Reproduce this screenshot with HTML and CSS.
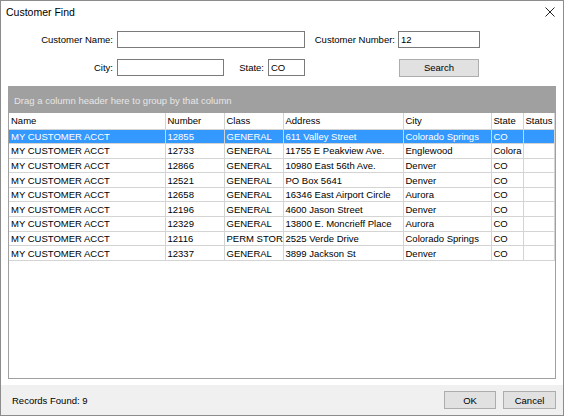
FILE: index.html
```html
<!DOCTYPE html>
<html lang="en">
<head>
    <meta charset="UTF-8">
    <title>Customer Find</title>
    <link rel="stylesheet" href="styles.css">
</head>
<body>
<div class="window">
    <div class="titlebar">
        <span class="title">Customer Find</span>
        <svg class="close" width="10" height="10" viewBox="0 0 10 10">
            <path d="M0.5 0.5 L9.5 9.5 M9.5 0.5 L0.5 9.5" stroke="#222" stroke-width="1" fill="none"/>
        </svg>
    </div>

    <div class="search-form">
        <div class="form-row">
            <label class="lbl lbl-main">Customer Name:</label>
            <input class="txt txt-name" type="text" value="">
            <label class="lbl lbl-number">Customer Number:</label>
            <input class="txt txt-number" type="text" value="12">
        </div>
        <div class="form-row">
            <label class="lbl lbl-main">City:</label>
            <input class="txt txt-city" type="text" value="">
            <label class="lbl lbl-state">State:</label>
            <input class="txt txt-state" type="text" value="CO">
            <button class="btn btn-search">Search</button>
        </div>
    </div>

    <div class="grid">
        <div class="group-panel">Drag a column header here to group by that column</div>
        <table class="results">
            <colgroup>
                <col style="width:156px"><col style="width:59px"><col style="width:59px"><col style="width:120px">
                <col style="width:88px"><col style="width:32px"><col style="width:31px">
            </colgroup>
            <thead>
                <tr><th>Name</th><th>Number</th><th>Class</th><th>Address</th><th>City</th><th>State</th><th>Status</th></tr>
            </thead>
            <tbody>
                <tr class="selected"><td>MY CUSTOMER ACCT</td><td>12855</td><td>GENERAL</td><td>611 Valley Street</td><td>Colorado Springs</td><td>CO</td><td></td></tr>
                <tr><td>MY CUSTOMER ACCT</td><td>12733</td><td>GENERAL</td><td>11755 E Peakview Ave.</td><td>Englewood</td><td>Colora</td><td></td></tr>
                <tr><td>MY CUSTOMER ACCT</td><td>12866</td><td>GENERAL</td><td>10980 East 56th Ave.</td><td>Denver</td><td>CO</td><td></td></tr>
                <tr><td>MY CUSTOMER ACCT</td><td>12521</td><td>GENERAL</td><td>PO Box 5641</td><td>Denver</td><td>CO</td><td></td></tr>
                <tr><td>MY CUSTOMER ACCT</td><td>12658</td><td>GENERAL</td><td>16346 East Airport Circle</td><td>Aurora</td><td>CO</td><td></td></tr>
                <tr><td>MY CUSTOMER ACCT</td><td>12196</td><td>GENERAL</td><td>4600 Jason Street</td><td>Denver</td><td>CO</td><td></td></tr>
                <tr><td>MY CUSTOMER ACCT</td><td>12329</td><td>GENERAL</td><td>13800 E. Moncrieff Place</td><td>Aurora</td><td>CO</td><td></td></tr>
                <tr><td>MY CUSTOMER ACCT</td><td>12116</td><td><span class="clip">PERM STORA</span></td><td>2525 Verde Drive</td><td>Colorado Springs</td><td>CO</td><td></td></tr>
                <tr><td>MY CUSTOMER ACCT</td><td>12337</td><td>GENERAL</td><td>3899 Jackson St</td><td>Denver</td><td>CO</td><td></td></tr>
            </tbody>
        </table>
    </div>

    <div class="statusbar">
        <span class="records">Records Found: 9</span>
        <div class="actions">
            <button class="btn btn-ok">OK</button>
            <button class="btn btn-cancel">Cancel</button>
        </div>
    </div>
</div>
</body>
</html>
```

FILE: styles.css
```css
* {
    box-sizing: border-box;
}
body {
    margin: 0;
    font-family: "Liberation Sans", Arial, sans-serif;
    font-size: 9.5px;
    color: #000;
    background: #fff;
}
.window {
    width: 564px;
    height: 416px;
    border: 1px solid #8c8c8c;
    display: flex;
    flex-direction: column;
    background: #fff;
}
.titlebar {
    height: 21px;
    display: flex;
    align-items: center;
    justify-content: space-between;
    padding: 0 8px 0 5px;
}
.title {
    font-size: 10.5px;
}

/* search form */
.search-form {
    padding: 9px 0 0 7px;
    display: flex;
    flex-direction: column;
    gap: 11px;
}
.form-row {
    display: flex;
    align-items: center;
    height: 17px;
}
.lbl {
    text-align: right;
    white-space: nowrap;
}
.lbl-main {
    width: 105px;
    margin-right: 4px;
}
.lbl-number {
    width: 90px;
    margin-right: 3px;
}
.lbl-state {
    width: 40px;
    margin-right: 4px;
}
.txt {
    height: 17px;
    border: 1px solid #7a7a7a;
    font: inherit;
    padding: 0 2px;
    outline: none;
}
.txt-name { width: 188px; }
.txt-number { width: 82px; }
.txt-city { width: 107px; }
.txt-state { width: 37px; }
.btn {
    font: inherit;
    height: 18px;
    background: #e1e1e1;
    border: 1px solid #adadad;
    padding: 0;
    color: #000;
}
.btn-search {
    width: 80px;
    margin-left: 94px;
}

/* results grid */
.grid {
    margin: 10px 7px 0 7px;
    height: 293px;
    border: 1px solid #a0a0a0;
    display: flex;
    flex-direction: column;
}
.group-panel {
    height: 26px;
    background: #a0a0a0;
    color: #e6e6e6;
    padding: 8px 0 0 5px;
    flex-shrink: 0;
}
.results {
    border-collapse: collapse;
    table-layout: fixed;
    width: 545px;
}
.results th,
.results td {
    height: 14.6px;
    padding: 0 0 0 2px;
    border: 1px solid #d4d4d4;
    border-top: none;
    white-space: nowrap;
    overflow: hidden;
    text-align: left;
    font-weight: normal;
    line-height: 13px;
}
.results th {
    height: 16px;
}
.results tr > :first-child {
    border-left: none;
}
.results tr.selected td {
    background: #3399ff;
    color: #fff;
}
.clip {
    display: block;
    width: 56px;
    overflow: hidden;
}

/* bottom bar */
.statusbar {
    margin-top: auto;
    height: 30px;
    background: #f0f0f0;
    display: flex;
    align-items: center;
    justify-content: space-between;
    padding: 0 7px 0 11px;
}
.actions {
    display: flex;
    gap: 7px;
}
.btn-ok { width: 52px; }
.btn-cancel { width: 53px; }
```
